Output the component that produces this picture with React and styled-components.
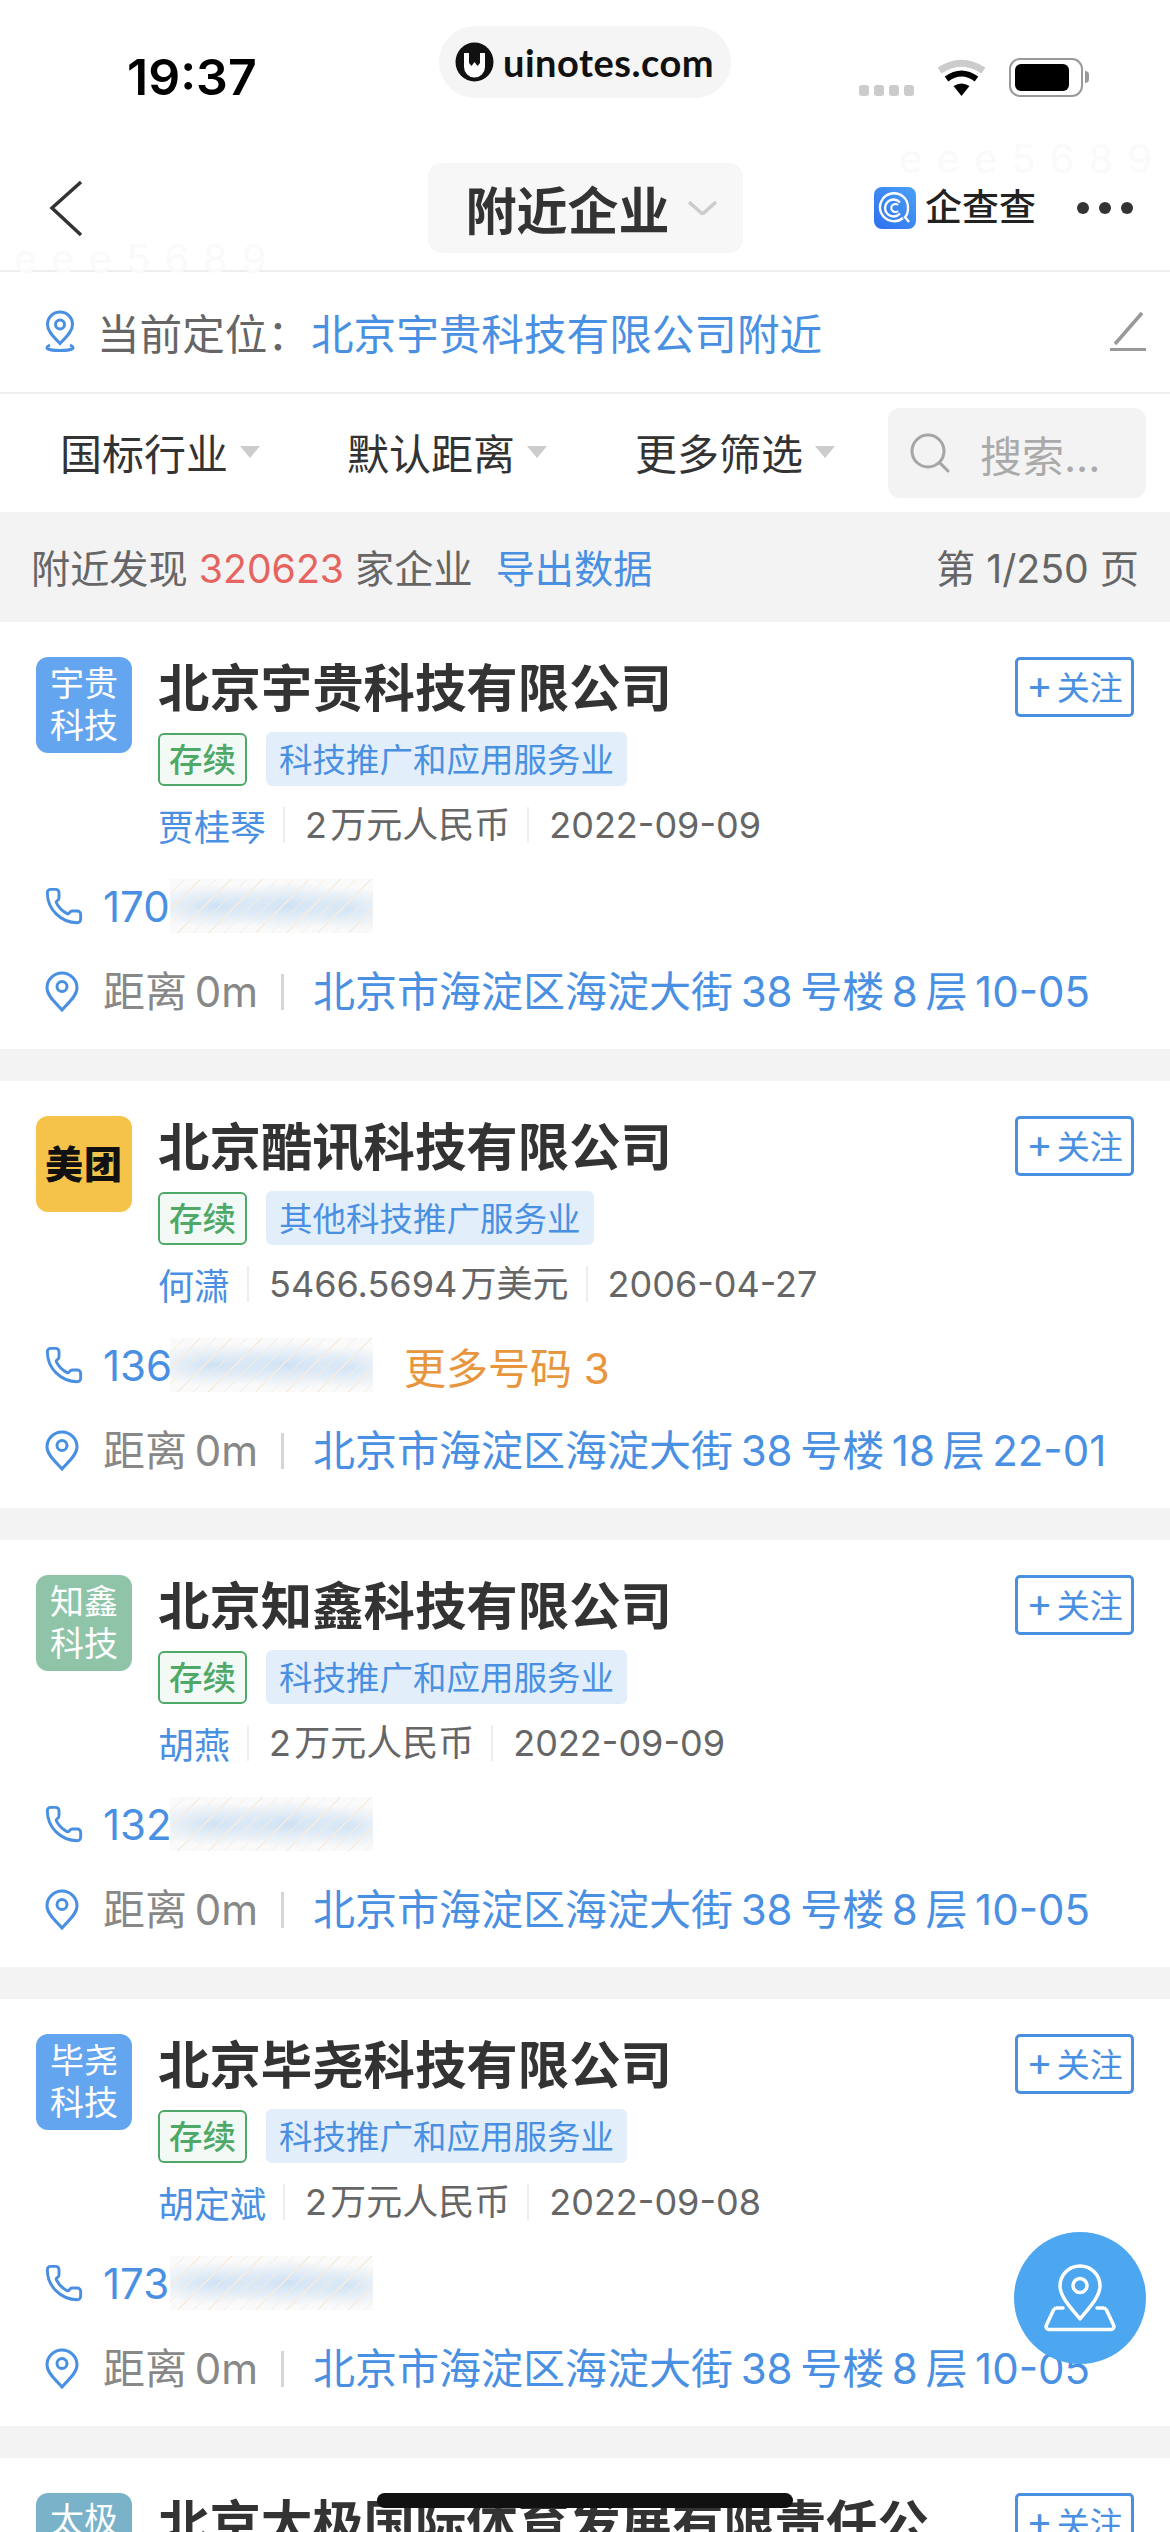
import React from "react";
import styled, { createGlobalStyle } from "styled-components";
import { Phone, Search } from "lucide-react";

const BLUE = "#4a90e2";

const COMPANIES = [
  {
    name: "北京宇贵科技有限公司",
    logo: "宇贵科技",
    logoBg: "#64a5f0",
    industry: "科技推广和应用服务业",
    person: "贾桂琴",
    capital: "2\u200a万元人民币",
    date: "2022-09-09",
    phone: "170",
    address: "北京市海淀区海淀大街\u200938\u2009号楼\u20098\u2009层\u200910-05"
  },
  {
    name: "北京酷讯科技有限公司",
    brand: "美团",
    logoBg: "#f5c34a",
    industry: "其他科技推广服务业",
    person: "何潇",
    capital: "5466.5694\u200a万美元",
    date: "2006-04-27",
    phone: "136",
    more: "更多号码 3",
    address: "北京市海淀区海淀大街\u200938\u2009号楼\u200918\u2009层\u200922-01"
  },
  {
    name: "北京知鑫科技有限公司",
    logo: "知鑫科技",
    logoBg: "#8fc4a8",
    industry: "科技推广和应用服务业",
    person: "胡燕",
    capital: "2\u200a万元人民币",
    date: "2022-09-09",
    phone: "132",
    address: "北京市海淀区海淀大街\u200938\u2009号楼\u20098\u2009层\u200910-05"
  },
  {
    name: "北京毕尧科技有限公司",
    logo: "毕尧科技",
    logoBg: "#64a5f0",
    industry: "科技推广和应用服务业",
    person: "胡定斌",
    capital: "2\u200a万元人民币",
    date: "2022-09-08",
    phone: "173",
    address: "北京市海淀区海淀大街\u200938\u2009号楼\u20098\u2009层\u200910-05"
  },
  {
    name: "北京太极国际体育发展有限责任公司",
    logo: "太极体育",
    logoBg: "#7ab2c9",
    industry: "体育组织",
    person: "王明",
    capital: "100\u200a万元人民币",
    date: "2010-01-01",
    phone: "138",
    address: "北京市海淀区海淀大街\u200938\u2009号楼\u20098\u2009层\u200910-05"
  }
];

export default function App() {
  return (
    <>
      <GlobalStyle />
      <Page>
        <StatusBar>
          <Time>19:37</Time>
          <SitePill>
            <SiteLogo />
            uinotes.com
          </SitePill>
          <StatusIcons>
            <SignalDots>
              <i />
              <i />
              <i />
              <i />
            </SignalDots>
            <WifiIcon />
            <Battery />
          </StatusIcons>
        </StatusBar>

        <NavBar>
          <WatermarkTop>eee5689</WatermarkTop>
          <WatermarkLeft>eee5689</WatermarkLeft>
          <BackIcon width="34" height="57" viewBox="0 0 34 57" fill="none">
            <path d="M32 2 L3 28 L32 55" stroke="#333" strokeWidth="3.5" />
          </BackIcon>
          <TitlePill>
            附近企业
            <svg width="29" height="14" viewBox="0 0 29 14" fill="none">
              <path d="M1 1 L14.5 13 L28 1" stroke="#ccc" strokeWidth="3.5" />
            </svg>
          </TitlePill>
          <NavRight>
            <QccBrand>
              <QccLogo />
              <span>企查查</span>
            </QccBrand>
            <MoreDots>
              <i />
              <i />
              <i />
            </MoreDots>
          </NavRight>
        </NavBar>

        <LocationRow>
          <LocationPin />
          <LocationLabel>当前定位：</LocationLabel>
          <LinkText>北京宇贵科技有限公司附近</LinkText>
          <EditIcon />
        </LocationRow>

        <FilterRow>
          <FilterItem>国标行业<Caret /></FilterItem>
          <FilterItem>默认距离<Caret /></FilterItem>
          <FilterItem>更多筛选<Caret /></FilterItem>
          <SearchBox>
            <Search size={48} strokeWidth={1.5} color="#a5a5a5" />
            搜索...
          </SearchBox>
        </FilterRow>

        <SummaryBar>
          <span>
            附近发现 <Count>320623</Count> 家企业 <ExportLink>导出数据</ExportLink>
          </span>
          <span>第 1/250 页</span>
        </SummaryBar>

        <CardList>
          {COMPANIES.map(company => (
            <CompanyCard key={company.name} company={company} />
          ))}
        </CardList>

        <MapButton>
          <MapIcon />
        </MapButton>
        <HomeIndicator />
      </Page>
    </>
  );
}

function CompanyCard({ company }) {
  return (
    <Card>
      <CardHead>
        <Avatar $bg={company.logoBg}>
          {company.brand ? <BrandMark>{company.brand}</BrandMark> : company.logo}
        </Avatar>
        <CardInfo>
          <CompanyName>{company.name}</CompanyName>
          <TagRow>
            <StatusTag>存续</StatusTag>
            <IndustryTag>{company.industry}</IndustryTag>
          </TagRow>
          <MetaRow>
            <MetaPerson>{company.person}</MetaPerson>
            <MetaItem>{company.capital}</MetaItem>
            <MetaItem>{company.date}</MetaItem>
          </MetaRow>
        </CardInfo>
        <FollowButton>
          <PlusSign>+</PlusSign>关注
        </FollowButton>
      </CardHead>

      <PhoneRow>
        <Phone size={40} strokeWidth={1.75} color={BLUE} />
        <PhoneNumber>{company.phone}</PhoneNumber>
        <BlurredDigits />
        {company.more && <MorePhones>{company.more}</MorePhones>}
      </PhoneRow>

      <AddressRow>
        <DistancePin />
        <Distance>距离{"\u2009"}0m</Distance>
        <RowDivider />
        <LinkText>{company.address}</LinkText>
      </AddressRow>
    </Card>
  );
}

function SiteLogo() {
  return (
    <svg width="39" height="40" viewBox="0 0 39 40">
      <ellipse cx="19.5" cy="20" rx="19" ry="19.5" fill="#111" />
      <path d="M9 11 h5 v10 l2.5 3 l3 -4 l3 4 l2.5 -3 v-10 h5 v14 a10 10 0 0 1 -21 0 z" fill="#fff" />
    </svg>
  );
}

function WifiIcon() {
  return (
    <svg width="51" height="38" viewBox="0 0 51 38" fill="none">
      <path d="M3.5 11.5 Q25.5 -3 47.5 11.5" stroke="#ccc" strokeWidth="7" />
      <path d="M10.5 20 Q25.5 9 40.5 20" stroke="#000" strokeWidth="6" />
      <path d="M17.5 27 Q25.5 22 33.5 27 L25.5 37 Z" fill="#000" />
    </svg>
  );
}

function QccLogo() {
  return (
    <svg width="42" height="42" viewBox="0 0 42 42" fill="none">
      <defs>
        <linearGradient id="qcc" x1="0" y1="1" x2="1" y2="0">
          <stop offset="0" stopColor="#2f6ff0" />
          <stop offset="1" stopColor="#4aa0f5" />
        </linearGradient>
      </defs>
      <rect width="42" height="42" rx="8" fill="url(#qcc)" />
      <path d="M29 31 A14 14 0 1 1 34 21 C34 25 33 28 31 30 L35 35" stroke="#fff" strokeWidth="2.4" />
      <path d="M26 15.5 A8.5 8.5 0 1 0 26 26.5" stroke="#fff" strokeWidth="2.4" />
      <path d="M24 18 A4 4 0 1 0 24 24" stroke="#fff" strokeWidth="2.2" />
    </svg>
  );
}

function LocationPin() {
  return (
    <svg width="32" height="42" viewBox="0 0 32 42" fill="none" stroke={BLUE} strokeWidth="3">
      <path d="M16 2 a12.5 12.5 0 0 1 12.5 12.5 c0 8 -8 14 -12.5 19 c-4.5 -5 -12.5 -11 -12.5 -19 A12.5 12.5 0 0 1 16 2 z" />
      <circle cx="16" cy="14.5" r="4.5" />
      <path d="M6 35 c-6 3 -3 5.5 10 5.5 s16 -2.5 10 -5.5" />
    </svg>
  );
}

function EditIcon() {
  return (
    <EditSvg width="36" height="40" viewBox="0 0 36 40" fill="none" stroke="#999">
      <path d="M5 33 L32 2" strokeWidth="3.5" />
      <path d="M0 38.5 H36" strokeWidth="3" />
    </EditSvg>
  );
}

function DistancePin() {
  return (
    <PinSvg width="34" height="41" viewBox="0 0 34 41" fill="none" stroke={BLUE} strokeWidth="3">
      <path d="M17 2 a15 15 0 0 1 15 15 c0 8 -9 15 -15 22 c-6 -7 -15 -14 -15 -22 a15 15 0 0 1 15 -15 z" />
      <circle cx="17" cy="15.5" r="5" />
    </PinSvg>
  );
}

function MapIcon() {
  return (
    <svg width="72" height="68" viewBox="0 0 72 68" fill="none" stroke="#fff" strokeWidth="3.5" strokeLinejoin="round" strokeLinecap="round">
      <path d="M36 2 a20 20 0 0 1 20 20 c0 11 -12 23 -20 33 c-8 -10 -20 -22 -20 -33 a20 20 0 0 1 20 -20 z" />
      <circle cx="36" cy="21.5" r="7" />
      <path d="M19 44 h-6 a4 4 0 0 0 -3.5 2 L2.5 61 a3 3 0 0 0 3 4.5 h61 a3 3 0 0 0 3 -4.5 L62.5 46 a4 4 0 0 0 -3.5 -2 h-6" />
    </svg>
  );
}

const GlobalStyle = createGlobalStyle`
  html, body {
    margin: 0;
    background: #fff;
  }
  * {
    box-sizing: border-box;
  }
`;

const Page = styled.div`
  position: relative;
  width: 1170px;
  height: 2532px;
  overflow: hidden;
  background: #fff;
  font-family: Inter, "Noto Sans CJK SC", sans-serif;
  color: #333;
`;

const StatusBar = styled.div`
  display: grid;
  grid-template-columns: 1fr auto 1fr;
  align-items: start;
  height: 146px;
  padding-top: 26px;
`;

const Time = styled.div`
  margin: 23px 0 0 127px;
  font-size: 50px;
  line-height: 56px;
  font-weight: 600;
  color: #000;
`;

const SitePill = styled.div`
  display: flex;
  align-items: center;
  gap: 9px;
  width: 292px;
  height: 72px;
  padding-left: 16px;
  border-radius: 36px;
  background: #f5f5f5;
  font-family: Lato, sans-serif;
  font-size: 38px;
  font-weight: 700;
  letter-spacing: 0.5px;
  color: #111;
`;

const StatusIcons = styled.div`
  display: flex;
  align-items: flex-end;
  justify-content: flex-end;
  margin: 32px 87px 0 0;
  gap: 22px;
`;

const SignalDots = styled.div`
  display: flex;
  gap: 5px;
  margin-bottom: 1px;
  i {
    width: 10px;
    height: 11px;
    border-radius: 3px;
    background: #ccc;
  }
`;

const Battery = styled.div`
  position: relative;
  width: 74px;
  height: 39px;
  padding: 4px;
  border: 2.5px solid #999;
  border-radius: 11px;
  &::before {
    content: "";
    display: block;
    width: 54px;
    height: 100%;
    border-radius: 6px;
    background: #000;
  }
  &::after {
    content: "";
    position: absolute;
    top: 11px;
    right: -8px;
    width: 4px;
    height: 12px;
    border-radius: 0 4px 4px 0;
    background: #999;
  }
`;

const NavBar = styled.div`
  position: relative;
  display: grid;
  grid-template-columns: 1fr auto 1fr;
  align-items: center;
  height: 126px;
  padding: 0 37px;
  border-bottom: 2px solid #eee;
`;

const BackIcon = styled.svg`
  margin-left: 12px;
`;

const Watermark = styled.div`
  position: absolute;
  font-size: 40px;
  line-height: 42px;
  letter-spacing: 14px;
  color: #fafafa;
`;

const WatermarkTop = styled(Watermark)`
  top: -8px;
  right: 4px;
`;

const WatermarkLeft = styled(Watermark)`
  top: 92px;
  left: 14px;
`;

const TitlePill = styled.div`
  position: relative;
  display: flex;
  align-items: center;
  gap: 18px;
  width: 315px;
  height: 90px;
  padding-left: 38px;
  border-radius: 14px;
  background: #f7f7f7;
  font-size: 51px;
  font-weight: 600;
  color: #333;
`;

const NavRight = styled.div`
  display: flex;
  align-items: center;
  justify-content: flex-end;
  gap: 41px;
`;

const QccBrand = styled.div`
  display: flex;
  align-items: center;
  gap: 9px;
  font-size: 37px;
  font-weight: 500;
  line-height: 42px;
  color: #222;
`;

const MoreDots = styled.div`
  display: flex;
  gap: 10px;
  i {
    width: 12px;
    height: 12px;
    border-radius: 50%;
    background: #333;
  }
`;

const LocationRow = styled.div`
  display: flex;
  align-items: center;
  height: 122px;
  padding: 0 24px 2px 44px;
  border-bottom: 2px solid #eee;
  font-size: 42.6px;
`;

const LocationLabel = styled.span`
  margin-left: 21px;
  width: 214px;
  color: #666;
`;

const LinkText = styled.span`
  color: ${BLUE};
  white-space: nowrap;
`;

const EditSvg = styled.svg`
  margin-left: auto;
`;

const FilterRow = styled.div`
  display: grid;
  grid-template-columns: 287px 288px 1fr 258px;
  align-items: center;
  height: 118px;
  padding: 0 24px 0 60px;
  font-size: 42px;
  color: #333;
`;

const FilterItem = styled.div`
  display: flex;
  align-items: center;
  gap: 12px;
  padding-bottom: 3px;
`;

const Caret = styled.i`
  width: 0;
  height: 0;
  margin-top: 1px;
  border-left: 10.5px solid transparent;
  border-right: 10.5px solid transparent;
  border-top: 12px solid #ccc;
`;

const SearchBox = styled.div`
  display: flex;
  align-items: center;
  gap: 26px;
  height: 90px;
  padding-left: 18px;
  border-radius: 12px;
  background: #f3f3f3;
  color: #aaa;
`;

const SummaryBar = styled.div`
  display: flex;
  align-items: center;
  justify-content: space-between;
  height: 110px;
  padding: 0 31px 3px;
  background: #f3f3f3;
  font-size: 39.2px;
  color: #666;
`;

const Count = styled.span`
  color: #e5645f;
`;

const ExportLink = styled.span`
  margin-left: 12px;
  color: ${BLUE};
`;

const CardList = styled.div`
  display: flex;
  flex-direction: column;
  gap: 32px;
  background: #f3f3f3;
`;

const Card = styled.div`
  padding: 35px 36px 34px;
  background: #fff;
`;

const CardHead = styled.div`
  display: grid;
  grid-template-columns: 96px 1fr 119px;
  column-gap: 26px;
  align-items: start;
`;

const Avatar = styled.div`
  display: flex;
  align-items: center;
  justify-content: center;
  width: 96px;
  height: 96px;
  padding: 0 12px;
  border-radius: 12px;
  background: ${props => props.$bg};
  font-size: 34px;
  line-height: 42px;
  text-align: center;
  color: #fff;
`;

const BrandMark = styled.span`
  font-size: 38px;
  font-weight: 900;
  white-space: nowrap;
  letter-spacing: 1px;
  color: #111;
`;

const CardInfo = styled.div`
  min-width: 0;
  padding-right: 50px;
`;

const CompanyName = styled.div`
  height: 64px;
  font-size: 51.4px;
  line-height: 62px;
  font-weight: 600;
  color: #333;
`;

const TagRow = styled.div`
  display: flex;
  align-items: center;
  gap: 19px;
  margin-top: 11px;
  font-size: 33.5px;
`;

const StatusTag = styled.span`
  display: flex;
  align-items: center;
  justify-content: center;
  width: 89px;
  height: 53px;
  padding-bottom: 3px;
  border: 2px solid #4ea868;
  border-radius: 6px;
  background: #f3faf5;
  font-weight: 500;
  color: #4ea868;
`;

const IndustryTag = styled.span`
  display: flex;
  align-items: center;
  height: 54px;
  padding: 0 13px 3px;
  border-radius: 6px;
  background: #e3eefb;
  color: ${BLUE};
`;

const MetaRow = styled.div`
  display: flex;
  align-items: center;
  height: 48px;
  margin-top: 15px;
  font-size: 36px;
  color: #666;
`;

const MetaPerson = styled.span`
  color: ${BLUE};
`;

const MetaItem = styled.span`
  margin-left: 17px;
  padding-left: 20px;
  border-left: 2px solid #eee;
  line-height: 36px;
`;

const FollowButton = styled.div`
  display: flex;
  align-items: center;
  justify-content: center;
  height: 60px;
  padding-bottom: 2px;
  border: 3px solid ${BLUE};
  border-radius: 5px;
  font-size: 33px;
  color: ${BLUE};
`;

const PlusSign = styled.span`
  margin: -2px 4px 0 0;
  font-size: 40px;
  line-height: 40px;
  font-weight: 400;
`;

const PhoneRow = styled.div`
  display: flex;
  align-items: center;
  height: 54px;
  margin-top: 30px;
  padding-left: 8px;
  font-size: 42px;
  color: ${BLUE};
`;

const PhoneNumber = styled.span`
  width: 67px;
  margin-left: 19px;
`;

const BlurredDigits = styled.div`
  width: 203px;
  height: 54px;
  background:
    repeating-linear-gradient(135deg, transparent 0 10px, #f8ecdf 10px 11px),
    radial-gradient(ellipse 70px 22px at 22% 50%, #cfe2f4, transparent),
    radial-gradient(ellipse 70px 24px at 58% 50%, #cde1f4, transparent),
    radial-gradient(ellipse 50px 22px at 88% 55%, #d3e5f5, transparent),
    #fafafa;
`;

const MorePhones = styled.span`
  margin-left: 31px;
  color: #e8963e;
`;

const AddressRow = styled.div`
  display: flex;
  align-items: center;
  height: 54px;
  margin-top: 28px;
  padding-left: 9px;
  font-size: 42px;
`;

const PinSvg = styled.svg`
  margin-top: 6px;
`;

const Distance = styled.span`
  margin-left: 24px;
  width: 151px;
  color: #888;
  white-space: nowrap;
`;

const RowDivider = styled.i`
  width: 3px;
  height: 36px;
  margin: 8px 29px 0 27px;
  background: #d5d5d5;
`;

const MapButton = styled.div`
  position: absolute;
  top: 2232px;
  right: 24px;
  display: flex;
  align-items: center;
  justify-content: center;
  width: 132px;
  height: 132px;
  border-radius: 50%;
  background: #4da6f0;
`;

const HomeIndicator = styled.div`
  position: absolute;
  top: 2493px;
  left: 377px;
  width: 416px;
  height: 15px;
  border-radius: 8px;
  background: #111;
`;
